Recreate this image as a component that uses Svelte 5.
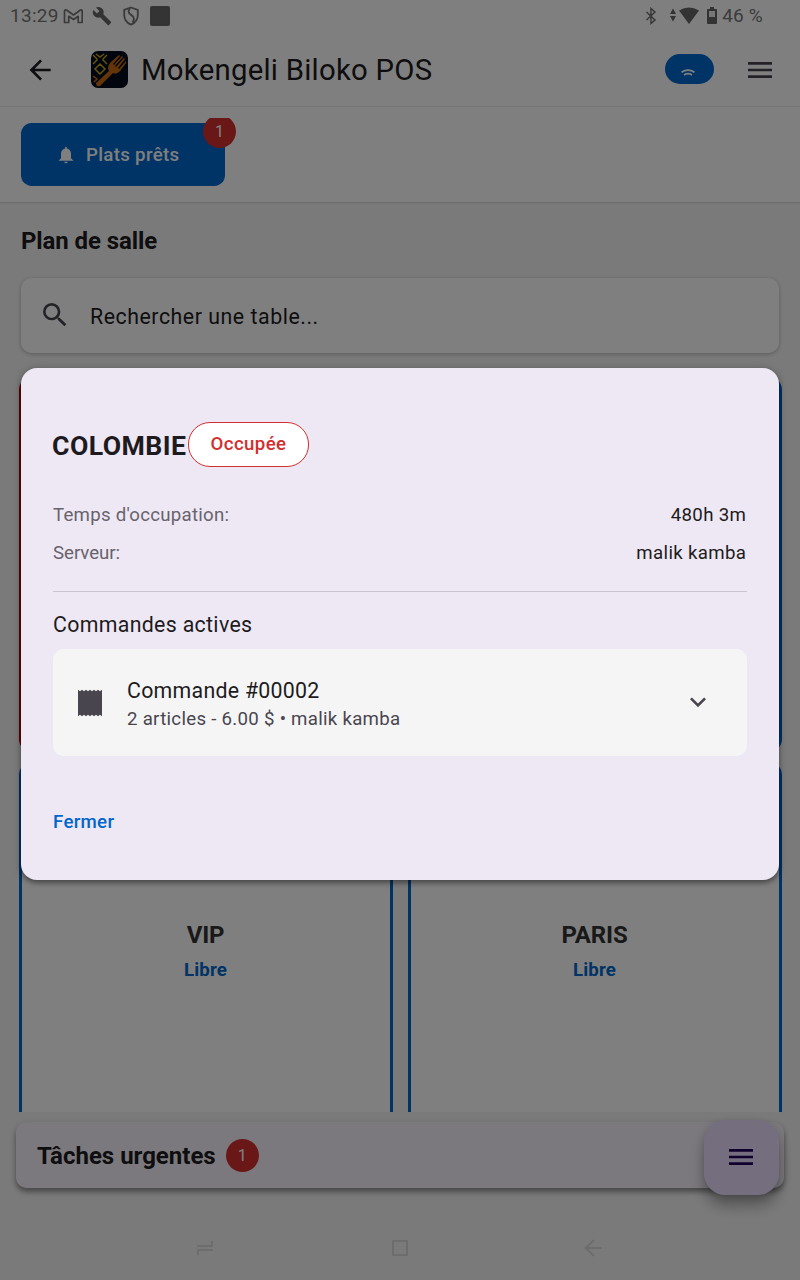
<script>
  const tables = [
    { busy: true },
    {},
    { name: 'VIP', status: 'Libre' },
    { name: 'PARIS', status: 'Libre' }
  ];
  const details = [
    { label: "Temps d'occupation:", value: '480h 3m' },
    { label: 'Serveur:', value: 'malik kamba', tight: true }
  ];
  const menuPath = 'M3,6H21V8H3V6M3,11H21V13H3V11M3,16H21V18H3V16Z';
</script>

<div class="screen">
  <div class="status">
    <span class="clock">13:29</span>
    <svg class="s-mail" width="20" height="16" viewBox="0 0 20 16" fill="none" stroke="#747474" stroke-width="1.7" stroke-linejoin="round"><path d="M1.500 14.500V3Q1.700 1.300 3.500 2L10.500 7L17.500 2Q19.200 1.300 19.200 3V14.500H15.200V8.300L10.500 11.500L5.700 8.300V14.500Z" /></svg>
    <svg class="s-wrench" width="20" height="20" viewBox="0 0 24 24" fill="#666"><path d="M22.7,19L13.6,9.9C14.5,7.6 14,4.9 12.1,3C10.1,1 7.1,0.6 4.7,1.7L9,6L6,9L1.6,4.7C0.4,7.1 0.9,10.1 2.9,12.1C4.8,14 7.5,14.5 9.8,13.6L18.9,22.7C19.3,23.1 19.9,23.1 20.3,22.7L22.6,20.4C23.1,20 23.1,19.3 22.7,19Z" /></svg>
    <svg class="s-shield" width="16" height="20" viewBox="0 0 16 20" fill="none" stroke="#747474" stroke-width="1.8"><path d="M8 1.5L14.8 3.8V9C14.8 13.5 12 17 8 18.6C4 17 1.2 13.5 1.2 9V3.8Z" /><path d="M7 2.500Q4.500 5.500 6.500 7.500L10 10.500Q12 13 9.500 16.500" /></svg>
    <span class="s-square"></span>
    <span class="grow"></span>
    <svg class="s-bt" width="12" height="18" viewBox="0 0 12 18" fill="none" stroke="#6a6a6a" stroke-width="1.4"><path d="M1.500 5L10 13L6 16.500V1.500L10 5L1.500 13" /></svg>
    <svg class="s-wifi" width="30" height="18" viewBox="0 0 30 18" fill="#666"><path d="M1 7L4 1.500L7 7ZM1 9H7L4 14.500ZM10 3.500Q20 -2.500 30 3.500L20 17Z" /></svg>
    <svg class="s-bat" width="10" height="18" viewBox="0 0 10 18"><path d="M3 0H7V2H9Q10 2 10 3V16Q10 17 9 17H1Q0 17 0 16V3Q0 2 1 2H3Z" fill="#666" /><path d="M2 4H8V10H2Z" fill="#eee" /></svg>
    <span class="pct">46 %</span>
  </div>

  <header>
    <svg class="back" width="32" height="32" viewBox="0 0 24 24" fill="#1d1b20"><path d="M20,11V13H8L13.5,18.5L12.08,19.92L4.16,12L12.08,4.08L13.5,5.5L8,11H20Z" /></svg>
    <svg class="logo" width="37" height="37" viewBox="0 0 37 37">
      <rect width="37" height="37" rx="7" fill="#020a1c" />
      <g fill="none" stroke="#c8a51c" stroke-width="1.5"><path d="M2 4L6 8V9L2 13M16 4L12 8V9L16 13M5 3L9 6L13 3M9 13L14 18L9 23L4 18Z" /></g>
      <path d="M2 25L6 28L3 31" fill="none" stroke="#c96a10" stroke-width="1.5" />
      <path d="M5 32L18 20C16 16 18 13 20 11L28 4L29 5L22 13L23 14L31 5L32 6L24 15L25 16L33 7L34 8L27 17L28 18L35 10L35 12L29 20C26 23 24 23 22 22L9 35Q5 36 5 32Z" fill="#c96a10" />
    </svg>
    <h1>Mokengeli Biloko POS</h1>
    <span class="grow"></span>
    <div class="pill"><svg width="14" height="7" viewBox="0 0 14 7" fill="none" stroke="#fff" stroke-width="1.7"><path d="M0.500 3.200Q7 -1 13.500 3.200M3 5.900Q7 3.500 11 5.900" /></svg></div>
    <svg class="menu" width="32" height="32" viewBox="0 0 24 24" fill="#49454f"><path d={menuPath} /></svg>
  </header>

  <section class="actions">
    <button class="ready">
      <svg width="20" height="20" viewBox="0 0 24 24" fill="#fff"><path d="M14,20A2,2 0 0,1 12,22A2,2 0 0,1 10,20H14M12,2A1,1 0 0,1 13,3V4.080C15.840,4.560 18,7.030 18,10V16L21,19H3L6,16V10C6,7.030 8.160,4.560 11,4.080V3A1,1 0 0,1 12,2Z" /></svg>
      <span>Plats prêts</span>
    </button>
    <div class="clip"><span class="badge">1</span></div>
  </section>

  <main>
    <h2>Plan de salle</h2>
    <div class="search">
      <svg width="32" height="32" viewBox="0 0 24 24" fill="#49454f"><path d="M9.5,3A6.5,6.5 0 0,1 16,9.5C16,11.11 15.41,12.59 14.44,13.73L14.71,14H15.5L20.5,19L19,20.5L14,15.5V14.71L13.73,14.44C12.59,15.41 11.11,16 9.5,16A6.5,6.5 0 0,1 3,9.5A6.5,6.5 0 0,1 9.5,3M9.5,5C7,5 5,7 5,9.5C5,12 7,14 9.5,14C12,14 14,12 14,9.5C14,7 12,5 9.5,5Z" /></svg>
      <span>Rechercher une table...</span>
    </div>
    <div class="tables">
      {#each tables as t}
        <article class:busy={t.busy}>
          {#if t.name}
            <strong>{t.name}</strong>
            <span>{t.status}</span>
          {/if}
        </article>
      {/each}
    </div>
  </main>

  <footer>
    <div class="tasks"><strong>Tâches urgentes</strong><span class="badge">1</span></div>
    <nav>
      <svg width="18" height="18" viewBox="0 0 18 18"><path d="M1 7H16V2M17 11H2V16" /></svg>
      <svg width="18" height="18" viewBox="0 0 18 18"><path d="M2 2H16V16H2Z" /></svg>
      <svg width="18" height="18" viewBox="0 0 18 18"><path d="M17.500 9H2M10 1L1.500 9L10 17" /></svg>
    </nav>
  </footer>
  <button class="fab" aria-label="Menu"><svg width="32" height="32" viewBox="0 0 24 24" fill="#21005d"><path d={menuPath} /></svg></button>

  <div class="scrim">
    <div class="dialog" role="dialog">
      <div class="title"><h3>COLOMBIE</h3><span class="chip">Occupée</span></div>
      {#each details as d}
        <div class="detail"><span class:tight={d.tight}>{d.label}</span><b>{d.value}</b></div>
      {/each}
      <hr />
      <h4>Commandes actives</h4>
      <div class="order">
        <svg width="32" height="32" viewBox="0 0 24 24" fill="#49454f"><path d="M3,22L4.5,20.9L6,22L7.5,20.9L9,22L10.5,20.9L12,22L13.5,20.9L15,22L16.5,20.9L18,22L19.5,20.9L21,22V2L19.5,3.1L18,2L16.5,3.1L15,2L13.5,3.1L12,2L10.5,3.1L9,2L7.5,3.1L6,2L4.5,3.1L3,2Z" /></svg>
        <div class="lines"><span class="num">Commande #00002</span><span class="sub">2 articles - 6.00 $ • malik kamba</span></div>
        <svg class="chevron" width="32" height="32" viewBox="0 0 24 24" fill="#49454f"><path d="M7.41,8.58L12,13.17L16.59,8.58L18,10L12,16L6,10L7.41,8.58Z" /></svg>
      </div>
      <button class="close">Fermer</button>
    </div>
  </div>
</div>

<style>
  :global(body) { margin: 0; }
  * { box-sizing: border-box; }
  h1, h2, h3, h4 { margin: 0; font-weight: 400; }
  button { border: 0; margin: 0; font-family: inherit; }
  svg { display: block; flex: none; }
  .screen { position: relative; width: 800px; height: 1280px; overflow: hidden; background: #f5f5f5; font-family: Roboto, sans-serif; color: #1d1b20; white-space: nowrap; display: flex; flex-direction: column; }
  .grow { flex: 1; }
  .status { height: 32px; flex: none; background: #fff; display: flex; align-items: center; padding: 0 37px 1px 10px; font-size: 19px; color: #777; }
  .clock { width: 53px; letter-spacing: 0.3px; }
  .s-wrench { margin-left: 9px; }
  .s-shield { margin-left: 11px; }
  .s-square { width: 20px; height: 20px; margin-left: 11px; border-radius: 2px; background: #686868; }
  .s-wifi { margin-left: 12px; }
  .s-bat { margin-left: 8px; margin-right: 5px; }
  .pct { letter-spacing: 0.2px; }
  header { height: 75px; flex: none; background: #fff; border-bottom: 1px solid #eee; display: flex; align-items: center; padding: 2px 24px 0; }
  .logo { margin: -1px 14px 0 35px; }
  h1 { font-size: 29.33px; line-height: 37px; letter-spacing: 0.25px; margin-left: -1px; }
  .pill { width: 49px; height: 30px; margin: -2px 30px 0 0; border-radius: 15px; background: #06c; display: flex; padding: 15px 0 0 16px; }
  .actions { position: relative; height: 96px; flex: none; background: #fff; padding: 16px 21px; border-bottom: 1px solid #dcdcdc; box-shadow: 0 1px 2px #0001; }
  .ready { width: 204px; height: 63px; border-radius: 10.67px; background: #06c; color: #fff; display: flex; align-items: center; gap: 10.5px; padding: 0 0 0 34.5px; font-size: 18.67px; font-weight: 500; letter-spacing: 0.32px; }
  .clip { position: absolute; left: 203px; top: 11px; width: 33px; height: 30px; overflow: hidden; display: flex; align-items: flex-end; }
  .badge { width: 33px; height: 33px; flex: none; border-radius: 50%; background: #d32f2f; color: #fff; font-size: 16px; display: flex; align-items: center; justify-content: center; }
  main { height: 909px; flex: none; overflow: hidden; padding: 22px 19px 0; }
  h2 { font-size: 24px; line-height: 32px; font-weight: 700; letter-spacing: -0.1px; padding-left: 2px; }
  .search { margin: 21px 2px 0; height: 75px; background: #fff; border-radius: 10.67px; box-shadow: 0 1px 4px #0004; display: flex; align-items: center; gap: 19px; padding-left: 18px; font-size: 21.33px; letter-spacing: 0.53px; }
  .search svg { margin-top: -1px; }
  .search span { padding-top: 2px; }
  .tables { margin-top: 24px; display: grid; grid-template-columns: 374px 374px; grid-auto-rows: 375px; column-gap: 15px; row-gap: 10px; }
  article { border: 3px solid #06c; border-radius: 13px; background: #fff; display: flex; flex-direction: column; align-items: center; justify-content: center; gap: 6px; padding: 3px 1px 0 0; color: #333; }
  article strong { font-size: 24px; line-height: 32px; letter-spacing: -0.15px; }
  article span { font-size: 18.67px; line-height: 27px; font-weight: 700; letter-spacing: 0.1px; color: #06c; }
  .busy { border-color: #c40000; }
  footer { flex: 1; padding: 10px 16px 0; }
  .tasks { height: 66px; border-radius: 10.67px; background: #f7f2fa; box-shadow: 0 4px 5px #0005, 0 2px 8px #0002; display: flex; align-items: center; gap: 10px; padding-left: 21px; font-size: 24px; }
  .tasks strong { padding-top: 2px; }
  nav { display: grid; grid-template-columns: 18px 18px 18px; justify-content: space-between; padding: 51px 182px 0 180px; }
  nav svg:nth-child(2) { margin-left: 1px; }
  nav path { fill: none; stroke: #dadada; stroke-width: 2; }
  .fab { position: absolute; left: 704px; top: 1120px; width: 75px; height: 75px; border-radius: 21.33px; background: #eaddff; box-shadow: 0 12px 16px -2px #0005, 0 2px 8px #0002; display: flex; align-items: flex-start; padding: 21px 0 0 21px; }
  .scrim { position: absolute; inset: 0; background: rgba(0, 0, 0, 0.5); padding: 368px 21px 0; }
  .dialog { height: 512px; border-radius: 16px; background: #eee8f4; box-shadow: 0 3px 5px #0005, 0 1px 8px #0003; padding: 54px 32px 0; display: flex; flex-direction: column; }
  .title { display: flex; height: 74px; }
  h3 { width: 135px; margin-left: -1px; font-size: 26.67px; line-height: 48px; font-weight: 700; letter-spacing: 0.45px; }
  .chip { height: 45px; width: 121px; margin-left: 1px; border: 1.33px solid #d32f2f; border-radius: 22px; background: #fff; color: #d32f2f; text-align: center; line-height: 43px; font-size: 18.67px; font-weight: 500; letter-spacing: 0.4px; }
  .detail { height: 38px; line-height: 38px; display: flex; justify-content: space-between; font-size: 18.67px; letter-spacing: 0.24px; color: #67636c; }
  .detail .tight { letter-spacing: -0.04px; }
  .detail b { font-weight: 400; letter-spacing: 0.34px; padding-right: 0.7px; color: #1d1b20; }
  hr { width: 100%; height: 1px; border: 0; margin: 19px 0 0; background: #cac4d0; }
  h4 { font-size: 21.33px; line-height: 32px; letter-spacing: 0.32px; margin: 17px 0 8px; }
  .order { height: 107px; flex: none; border-radius: 10.67px; background: #f5f5f5; display: flex; align-items: center; padding: 0 33px 0 21px; }
  .lines { flex: 1; padding: 4px 0 0 21px; display: flex; flex-direction: column; }
  .num { font-size: 21.33px; line-height: 29px; letter-spacing: 0.27px; }
  .sub { font-size: 18.67px; line-height: 28px; letter-spacing: 0.28px; color: #49454f; }
  .chevron { margin-top: -2px; }
  .close { align-self: flex-start; margin-top: 53px; padding: 0; background: none; color: #06c; font-size: 18.67px; line-height: 27px; font-weight: 500; letter-spacing: 0.3px; }
</style>
